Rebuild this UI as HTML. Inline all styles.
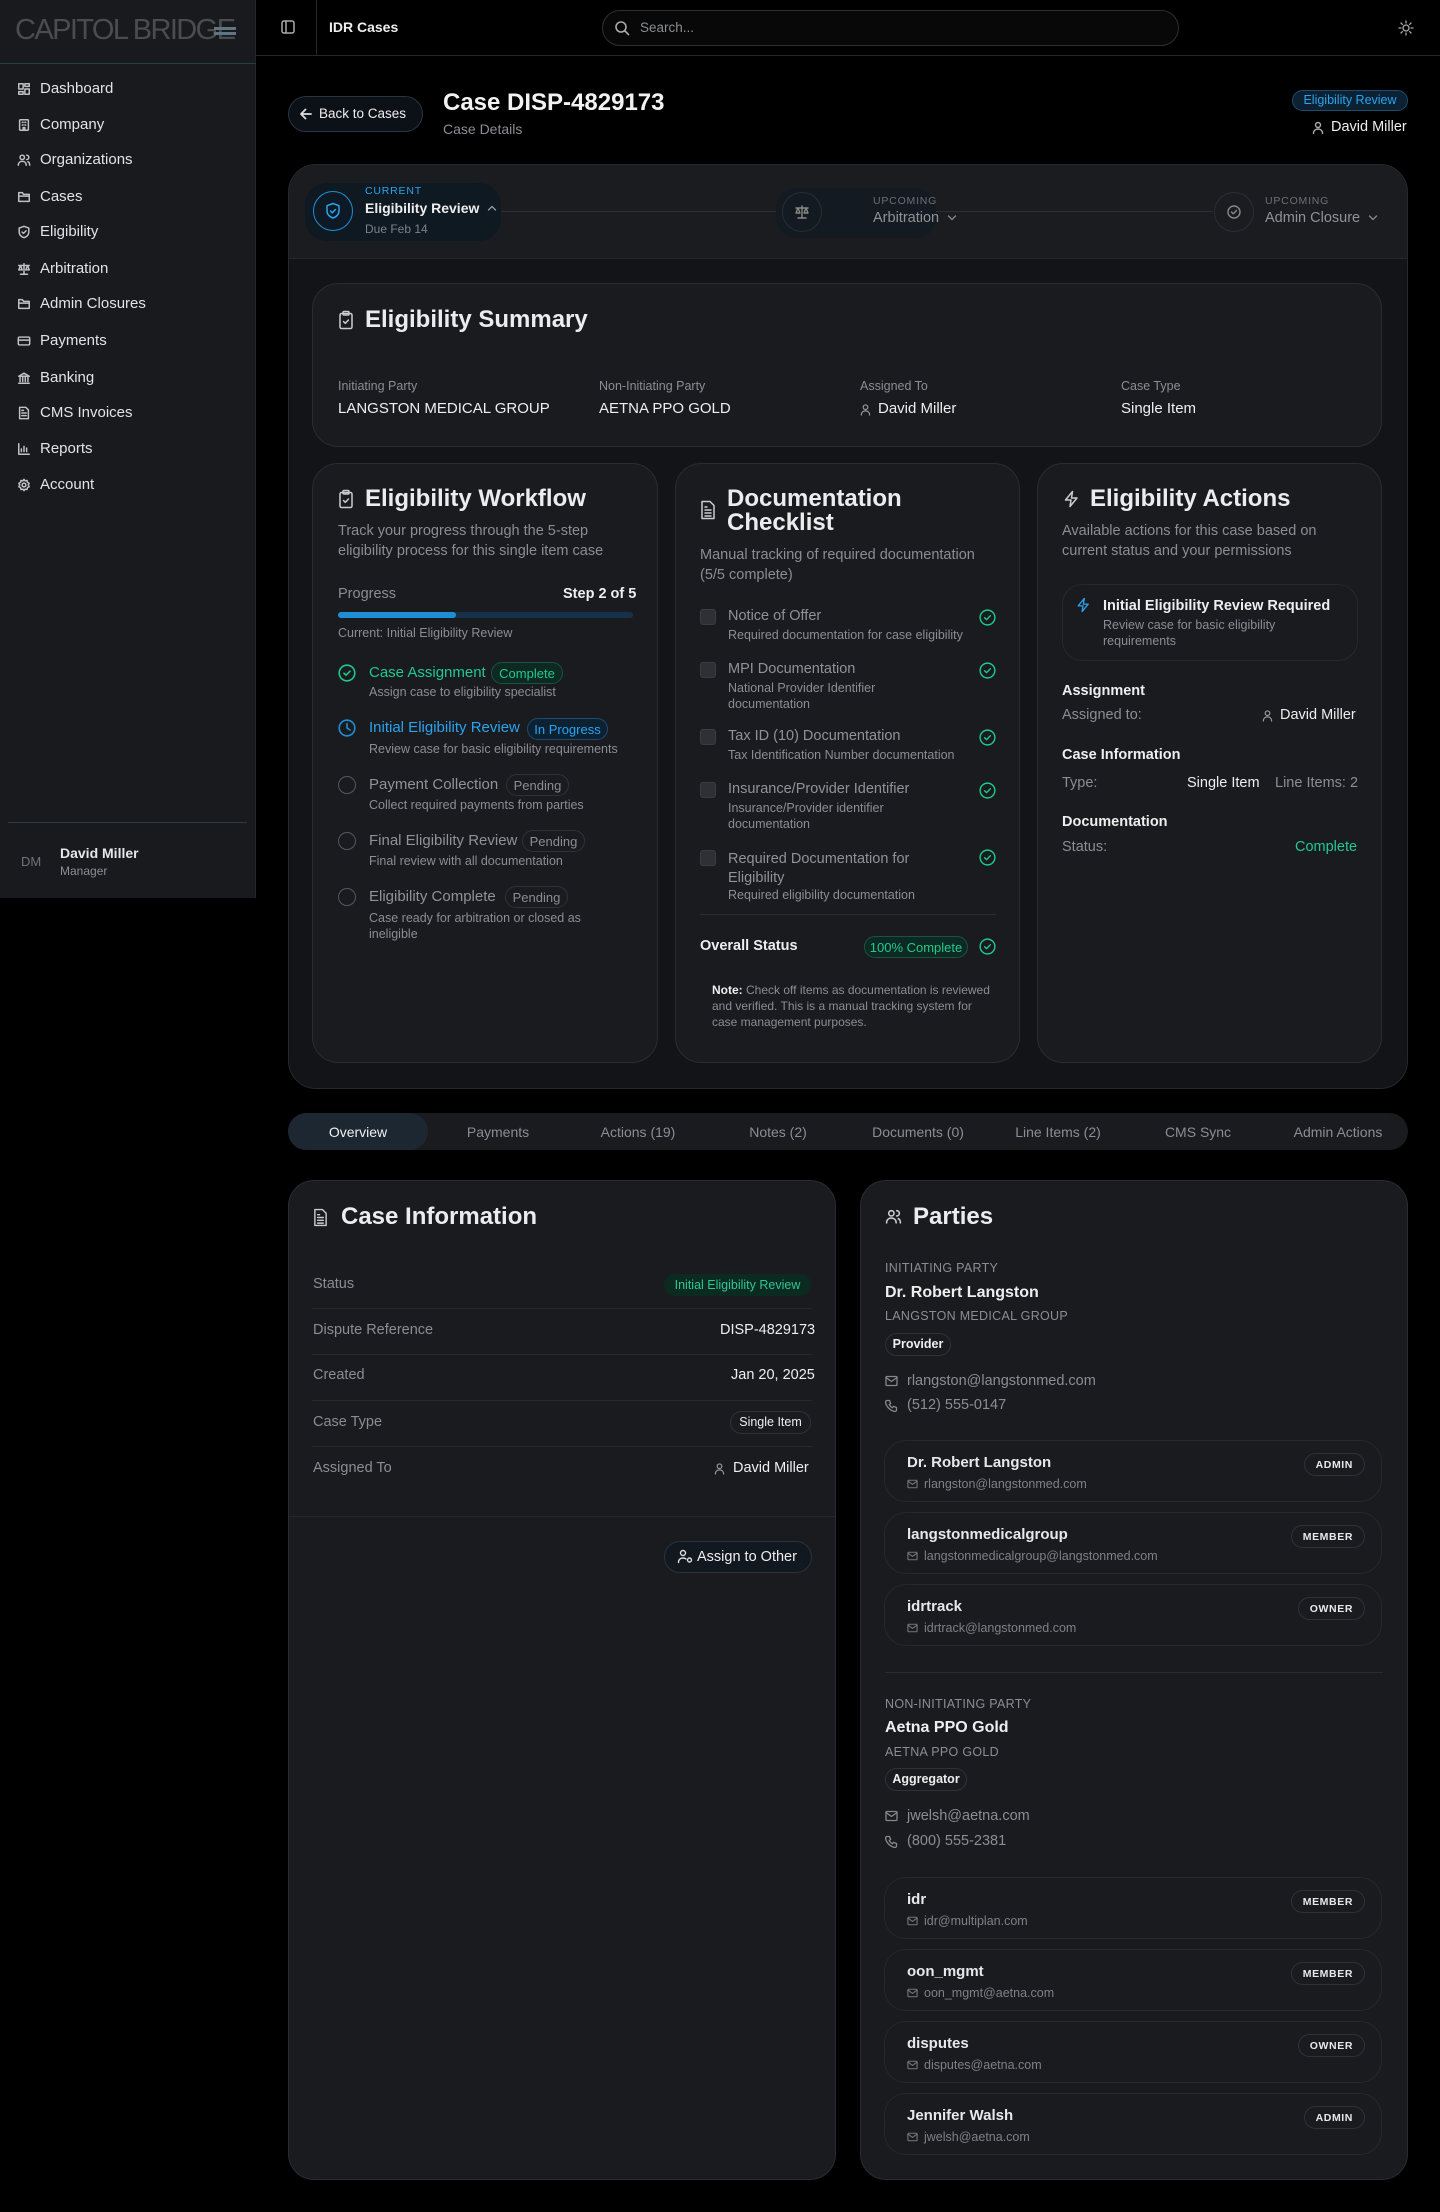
<!DOCTYPE html>
<html><head><meta charset="utf-8">
<style>
*{margin:0;padding:0;box-sizing:border-box}
body{width:1440px;height:2212px;background:#000;font-family:"Liberation Sans",Arial,sans-serif;color:#e8e8ea;position:relative;overflow:hidden}
.a{position:absolute}
.t{position:absolute;white-space:nowrap;line-height:1}
.muted{color:#8a8d93}
.dim{color:#6f7278}
svg{display:block}
.ic{position:absolute;fill:none;stroke:currentColor;stroke-width:1.8;stroke-linecap:round;stroke-linejoin:round}
.card{position:absolute;background:#191b1f;border:1px solid #2a2c31;border-radius:26px}
.pill{position:absolute;border:1px solid #2e3136;border-radius:999px;font-size:12px;line-height:1;display:flex;align-items:center;justify-content:center;white-space:nowrap}
.nav{position:absolute;left:17px;font-size:15px;color:#e2e3e6;display:flex;align-items:center;gap:9px}
.nav svg{width:14px;height:14px;fill:none;stroke:#bfc1c5;stroke-width:1.7;stroke-linecap:round;stroke-linejoin:round}
.row{position:absolute;left:312px;width:500px;height:1px;background:#26282d}
.mc{position:absolute;left:884px;width:498px;height:62px;border:1px solid #26282c;border-radius:22px}
.mc .n{position:absolute;left:22px;top:13px;font-size:15px;font-weight:bold;color:#e8e8ea}
.mc .e{position:absolute;left:22px;top:36px;font-size:12.5px;color:#7d8086;display:flex;align-items:center;gap:6px}
.mc .r{position:absolute;right:16px;top:12px;height:23px;padding:0 11px;border:1px solid #2e3136;border-radius:999px;font-size:10.5px;font-weight:bold;letter-spacing:.6px;display:flex;align-items:center}
.fx{display:flex;align-items:center;gap:8px}
</style></head><body>

<!-- Sidebar -->
<div class="a" style="left:0;top:0;width:256px;height:898px;background:#181a1e;border-right:1px solid #22252a"></div>
<div class="t" style="left:15px;top:16px;font-size:29px;font-weight:300;color:#4a4c50;letter-spacing:-1.6px">CAPITOL BRIDGE</div>
<div class="a" style="left:214px;top:27px;width:22px;height:3px;background:#5e7582"></div>
<div class="a" style="left:214px;top:32px;width:22px;height:3px;background:#5e7582"></div>
<div class="a" style="left:0;top:63px;width:256px;height:1px;background:#2e3a44"></div>

<div class="nav" style="top:80px"><svg viewBox="0 0 16 16"><rect x="2" y="2" width="5" height="6"/><rect x="9" y="2" width="5" height="3"/><rect x="9" y="8" width="5" height="6"/><rect x="2" y="11" width="5" height="3"/></svg>Dashboard</div>
<div class="nav" style="top:116px"><svg viewBox="0 0 16 16"><rect x="3" y="2" width="10" height="12" rx="1"/><path d="M6 5h1M9 5h1M6 8h1M9 8h1M7 14v-3h2v3"/></svg>Company</div>
<div class="nav" style="top:151px"><svg viewBox="0 0 16 16"><circle cx="6" cy="5" r="2.5"/><path d="M1.5 14c0-3 2-4.5 4.5-4.5s4.5 1.5 4.5 4.5M11 2.5a2.5 2.5 0 010 5M12.5 10c1.5.6 2 2 2 4"/></svg>Organizations</div>
<div class="nav" style="top:188px"><svg viewBox="0 0 16 16"><path d="M2 13V3h4l1.5 2H14v8z"/><path d="M2 7h12"/></svg>Cases</div>
<div class="nav" style="top:223px"><svg viewBox="0 0 16 16"><path d="M8 1.5l5.5 2v4.5c0 3.5-2.5 5.5-5.5 6.5-3-1-5.5-3-5.5-6.5V3.5z"/><path d="M5.8 8l1.6 1.6 3-3"/></svg>Eligibility</div>
<div class="nav" style="top:260px"><svg viewBox="0 0 16 16"><path d="M8 2v12M4 14h8M2 4h12M4 4l-2 5h4zM12 4l-2 5h4z"/></svg>Arbitration</div>
<div class="nav" style="top:295px"><svg viewBox="0 0 16 16"><path d="M2 13V3h4l1.5 2H14v8z"/><path d="M2 7h12"/></svg>Admin Closures</div>
<div class="nav" style="top:332px"><svg viewBox="0 0 16 16"><rect x="1.5" y="3.5" width="13" height="9" rx="1.5"/><path d="M1.5 7h13"/></svg>Payments</div>
<div class="nav" style="top:369px"><svg viewBox="0 0 16 16"><path d="M2 6l6-3.5L14 6zM3.5 7v5M6.5 7v5M9.5 7v5M12.5 7v5M2 14h12"/></svg>Banking</div>
<div class="nav" style="top:404px"><svg viewBox="0 0 16 16"><path d="M3 1.5h7l3 3v10H3z"/><path d="M5.5 8h5M5.5 11h5M5.5 5h2"/></svg>CMS Invoices</div>
<div class="nav" style="top:440px"><svg viewBox="0 0 16 16"><path d="M2 2v12h12M5 11V8M8 11V5M11 11V7"/></svg>Reports</div>
<div class="nav" style="top:476px"><svg viewBox="0 0 16 16"><circle cx="8" cy="8" r="2.2"/><path d="M8 1.5l1.3 1.8 2.2-.5.4 2.2 2 1-1 2 1 2-2 1-.4 2.2-2.2-.5L8 14.5l-1.3-1.8-2.2.5-.4-2.2-2-1 1-2-1-2 2-1 .4-2.2 2.2.5z"/></svg>Account</div>

<div class="a" style="left:8px;top:822px;width:239px;height:1px;background:#2e3a44"></div>
<div class="t" style="left:21px;top:855px;font-size:13px;color:#6f7278">DM</div>
<div class="t" style="left:60px;top:846px;font-size:14px;font-weight:bold;color:#e5e6e8">David Miller</div>
<div class="t" style="left:60px;top:865px;font-size:12px;color:#8a8d93">Manager</div>

<!-- Topbar -->
<div class="a" style="left:256px;top:55px;width:1184px;height:1px;background:#25272b"></div>
<div class="a" style="left:316px;top:0;width:1px;height:55px;background:#25272b"></div>
<svg class="ic" style="left:280px;top:19px;color:#aaa;stroke-width:1.5" width="16" height="16" viewBox="0 0 16 16"><rect x="2" y="2" width="12" height="12" rx="2"/><path d="M6 2v12"/></svg>
<div class="t" style="left:329px;top:20px;font-size:14px;font-weight:bold;color:#eee">IDR Cases</div>
<div class="a" style="left:602px;top:10px;width:577px;height:36px;border:1px solid #2d2f33;border-radius:18px;background:#080808"></div>
<svg class="ic" style="left:614px;top:20px;color:#aaa;stroke-width:1.6" width="16" height="16" viewBox="0 0 16 16"><circle cx="7" cy="7" r="5"/><path d="M11 11l3.5 3.5"/></svg>
<div class="t" style="left:640px;top:21px;font-size:13.5px;color:#8a8d93">Search...</div>
<svg class="ic" style="left:1398px;top:20px;color:#aaa;stroke-width:1.3" width="16" height="16" viewBox="0 0 16 16"><circle cx="8" cy="8" r="3"/><path d="M8 1v2M8 13v2M1 8h2M13 8h2M3 3l1.4 1.4M11.6 11.6L13 13M3 13l1.4-1.4M11.6 4.4L13 3"/></svg>

<!-- Header -->
<div class="a" style="left:288px;top:96px;width:135px;height:36px;border:1px solid #2b3440;border-radius:18px;background:#0c1117"></div>
<svg class="ic" style="left:299px;top:107px;color:#ddd" width="14" height="14" viewBox="0 0 14 14"><path d="M12 7H2M6.5 2.5L2 7l4.5 4.5"/></svg>
<div class="t" style="left:319px;top:107px;font-size:13.5px;color:#eee">Back to Cases</div>
<div class="t" style="left:443px;top:91px;font-size:24px;font-weight:bold;color:#f2f2f3">Case DISP-4829173</div>
<div class="t" style="left:443px;top:122px;font-size:14px;color:#8a8d93">Case Details</div>
<div class="pill" style="left:1292px;top:90px;width:116px;height:21px;background:#0c2233;border-color:#1d4c6e;color:#2aa3f0;font-size:12.5px">Eligibility Review</div>
<svg class="ic" style="left:1312px;top:121px;color:#aaa;stroke-width:1.4" width="12" height="13" viewBox="0 0 12 13"><circle cx="6" cy="4" r="2.5"/><path d="M1.5 12.5c0-3 2-4.5 4.5-4.5s4.5 1.5 4.5 4.5"/></svg>
<div class="t" style="left:1331px;top:120px;font-size:14.5px;color:#eee">David Miller</div>

<!-- Main eligibility panel -->
<div class="a" style="left:288px;top:164px;width:1120px;height:925px;background:#131417;border:1px solid #26282c;border-radius:28px;overflow:hidden">
  <div class="a" style="left:0;top:0;width:1120px;height:94px;background:#1a1c20;border-bottom:1px solid #24262a"></div>
</div>
<!-- stage bar -->
<div class="a" style="left:498px;top:211px;width:282px;height:1px;background:#2c2e33"></div>
<div class="a" style="left:932px;top:211px;width:281px;height:1px;background:#2c2e33"></div>
<div class="a" style="left:305px;top:183px;width:196px;height:58px;border-radius:22px;background:#0f1922"></div>
<div class="a" style="left:313px;top:191px;width:40px;height:40px;border-radius:50%;border:1.5px solid #1e8fd6;background:#0d1a25"></div>
<svg class="ic" style="left:325px;top:202px;color:#2aa3f0;stroke-width:1.5" width="16" height="18" viewBox="0 0 16 18"><path d="M8 1.5l6 2.2v5c0 3.6-2.6 6-6 7.3-3.4-1.3-6-3.7-6-7.3v-5z"/><path d="M5.5 9l1.8 1.8 3.2-3.3"/></svg>
<div class="t" style="left:365px;top:186px;font-size:10.5px;color:#2aa3f0;letter-spacing:.8px">CURRENT</div>
<div class="t fx" style="left:365px;top:201px;font-size:14px;font-weight:bold;color:#eee">Eligibility Review<svg class="ic" style="position:static;color:#999;stroke-width:1.3" width="10" height="8" viewBox="0 0 10 8"><path d="M1.5 6l3.5-3.5L8.5 6"/></svg></div>
<div class="t" style="left:365px;top:223px;font-size:12px;color:#7d8086">Due Feb 14</div>

<div class="a" style="left:776px;top:188px;width:160px;height:50px;border-radius:20px;background:#141a21"></div>
<div class="a" style="left:782px;top:192px;width:40px;height:40px;border-radius:50%;border:1px solid #2a2e33"></div>
<svg class="ic" style="left:794px;top:204px;color:#888;stroke-width:1.4" width="16" height="16" viewBox="0 0 16 16"><path d="M8 2v12M4 14h8M2 4h12M4 4l-2 5h4zM12 4l-2 5h4z"/></svg>
<div class="t" style="left:873px;top:196px;font-size:10.5px;color:#6c6f74;letter-spacing:.8px">UPCOMING</div>
<div class="t fx" style="left:873px;top:211px;font-size:14.5px;color:#8f9297">Arbitration<svg class="ic" style="position:static;color:#888;stroke-width:1.3" width="10" height="8" viewBox="0 0 10 8"><path d="M1.5 2l3.5 3.5L8.5 2"/></svg></div>
<div class="a" style="left:1214px;top:192px;width:40px;height:40px;border-radius:50%;border:1px solid #2a2e33"></div>
<svg class="ic" style="left:1226px;top:204px;color:#888;stroke-width:1.4" width="16" height="16" viewBox="0 0 16 16"><circle cx="8" cy="8" r="6"/><path d="M5.5 8l1.8 1.8 3.2-3.3"/></svg>
<div class="t" style="left:1265px;top:196px;font-size:10.5px;color:#6c6f74;letter-spacing:.8px">UPCOMING</div>
<div class="t fx" style="left:1265px;top:211px;font-size:14.5px;color:#8f9297">Admin Closure<svg class="ic" style="position:static;color:#888;stroke-width:1.3" width="10" height="8" viewBox="0 0 10 8"><path d="M1.5 2l3.5 3.5L8.5 2"/></svg></div>

<!-- Eligibility Summary -->
<div class="card" style="left:312px;top:283px;width:1070px;height:164px"></div>
<svg class="ic" style="left:338px;top:310px;color:#ccc;stroke-width:1.5" width="16" height="20" viewBox="0 0 16 20"><rect x="2" y="3.5" width="12" height="15" rx="1.5"/><rect x="5" y="1.5" width="6" height="3.5" rx="1"/><path d="M5.5 11.5l1.8 1.8 3.2-3.3"/></svg>
<div class="t" style="left:365px;top:308px;font-size:24px;font-weight:bold;color:#ececee">Eligibility Summary</div>
<div class="t muted" style="left:338px;top:380px;font-size:12.5px">Initiating Party</div>
<div class="t" style="left:338px;top:401px;font-size:15px;color:#eee">LANGSTON MEDICAL GROUP</div>
<div class="t muted" style="left:599px;top:380px;font-size:12.5px">Non-Initiating Party</div>
<div class="t" style="left:599px;top:401px;font-size:15px;color:#eee">AETNA PPO GOLD</div>
<div class="t muted" style="left:860px;top:380px;font-size:12.5px">Assigned To</div>
<svg class="ic" style="left:860px;top:403px;color:#999;stroke-width:1.3" width="11" height="13" viewBox="0 0 12 13"><circle cx="6" cy="4" r="2.5"/><path d="M1.5 12.5c0-3 2-4.5 4.5-4.5s4.5 1.5 4.5 4.5"/></svg>
<div class="t" style="left:878px;top:401px;font-size:15px;color:#eee">David Miller</div>
<div class="t muted" style="left:1121px;top:380px;font-size:12.5px">Case Type</div>
<div class="t" style="left:1121px;top:401px;font-size:15px;color:#eee">Single Item</div>

<!-- Workflow -->
<div class="card" style="left:312px;top:463px;width:346px;height:600px"></div>
<svg class="ic" style="left:338px;top:489px;color:#ccc;stroke-width:1.5" width="16" height="20" viewBox="0 0 16 20"><rect x="2" y="3.5" width="12" height="15" rx="1.5"/><rect x="5" y="1.5" width="6" height="3.5" rx="1"/><path d="M5.5 11.5l1.8 1.8 3.2-3.3"/></svg>
<div class="t" style="left:365px;top:487px;font-size:24px;font-weight:bold;color:#ececee">Eligibility Workflow</div>
<div class="t muted" style="left:338px;top:521px;font-size:14.5px;line-height:20px;white-space:normal;width:300px">Track your progress through the 5-step eligibility process for this single item case</div>
<div class="t muted" style="left:338px;top:587px;font-size:14.5px">Progress</div>
<div class="t" style="left:563px;top:587px;font-size:14.5px;font-weight:bold;color:#eee">Step 2 of 5</div>
<div class="a" style="left:338px;top:612px;width:295px;height:6px;border-radius:3px;background:#16324a"></div>
<div class="a" style="left:338px;top:612px;width:118px;height:6px;border-radius:3px;background:#1e8fd6"></div>
<div class="t muted" style="left:338px;top:627px;font-size:12.5px">Current: Initial Eligibility Review</div>

<svg class="ic" style="left:338px;top:664px;color:#1fc98a;stroke-width:1.6" width="18" height="18" viewBox="0 0 18 18"><circle cx="9" cy="9" r="7.8"/><path d="M6 9.2l2 2 4-4"/></svg>
<div class="t" style="left:369px;top:665px;font-size:15px;color:#22c98d">Case Assignment</div>
<div class="pill" style="left:491px;top:662px;width:72px;height:22px;background:#0d2a22;border-color:#1c5240;color:#22c98d;font-size:13px">Complete</div>
<div class="t muted" style="left:369px;top:686px;font-size:12.5px">Assign case to eligibility specialist</div>

<svg class="ic" style="left:338px;top:719px;color:#1e8fd6;stroke-width:1.6" width="18" height="18" viewBox="0 0 18 18"><circle cx="9" cy="9" r="7.8"/><path d="M9 4.5V9l3 2"/></svg>
<div class="t" style="left:369px;top:720px;font-size:15px;color:#2aa3f0">Initial Eligibility Review</div>
<div class="pill" style="left:527px;top:718px;width:81px;height:22px;background:#0c2233;border-color:#1d4c6e;color:#2aa3f0;font-size:13px">In Progress</div>
<div class="t muted" style="left:369px;top:743px;font-size:12.5px">Review case for basic eligibility requirements</div>

<div class="a" style="left:338px;top:776px;width:18px;height:18px;border-radius:50%;border:1.5px solid #54575c"></div>
<div class="t" style="left:369px;top:777px;font-size:15px;color:#8f9297">Payment Collection</div>
<div class="pill" style="left:506px;top:774px;width:63px;height:22px;color:#8a8d93;font-size:13px">Pending</div>
<div class="t muted" style="left:369px;top:799px;font-size:12.5px">Collect required payments from parties</div>

<div class="a" style="left:338px;top:832px;width:18px;height:18px;border-radius:50%;border:1.5px solid #54575c"></div>
<div class="t" style="left:369px;top:833px;font-size:15px;color:#8f9297">Final Eligibility Review</div>
<div class="pill" style="left:522px;top:830px;width:63px;height:22px;color:#8a8d93;font-size:13px">Pending</div>
<div class="t muted" style="left:369px;top:855px;font-size:12.5px">Final review with all documentation</div>

<div class="a" style="left:338px;top:888px;width:18px;height:18px;border-radius:50%;border:1.5px solid #54575c"></div>
<div class="t" style="left:369px;top:889px;font-size:15px;color:#8f9297">Eligibility Complete</div>
<div class="pill" style="left:505px;top:886px;width:63px;height:22px;color:#8a8d93;font-size:13px">Pending</div>
<div class="t muted" style="left:369px;top:910px;font-size:12.5px;line-height:16px;white-space:normal;width:240px">Case ready for arbitration or closed as ineligible</div>

<!-- Documentation -->
<div class="card" style="left:675px;top:463px;width:345px;height:600px"></div>
<svg class="ic" style="left:700px;top:500px;color:#ccc;stroke-width:1.5" width="16" height="20" viewBox="0 0 16 20"><path d="M2 1.5h8l4 4v13H2z"/><path d="M5 10h6M5 13h6M5 16h6M5 7h2"/></svg>
<div class="t" style="left:727px;top:487px;font-size:24px;font-weight:bold;color:#ececee;line-height:24px">Documentation<br>Checklist</div>
<div class="t muted" style="left:700px;top:545px;font-size:14.5px;line-height:20px;white-space:normal;width:300px">Manual tracking of required documentation (5/5 complete)</div>

<div class="t" style="left:700px;top:939px;font-size:14.5px;font-weight:bold;color:#eee">Overall Status</div>
<div class="pill" style="left:864px;top:936px;width:104px;height:22px;background:#0d2a22;border-color:#1c5240;color:#22c98d;font-size:13px">100% Complete</div>
<svg class="ic" style="left:979px;top:938px;color:#1fc98a;stroke-width:1.5" width="17" height="17" viewBox="0 0 18 18"><circle cx="9" cy="9" r="7.8"/><path d="M6 9.2l2 2 4-4"/></svg>
<div class="a" style="left:700px;top:914px;width:296px;height:1px;background:#2a2c31"></div>
<div class="t muted" style="left:712px;top:982px;font-size:12px;line-height:16px;white-space:normal;width:280px"><b style="color:#eee">Note:</b> Check off items as documentation is reviewed and verified. This is a manual tracking system for case management purposes.</div>

<!-- Actions -->
<div class="card" style="left:1037px;top:463px;width:345px;height:600px"></div>
<svg class="ic" style="left:1063px;top:490px;color:#ccc;stroke-width:1.5" width="16" height="18" viewBox="0 0 16 18"><path d="M9.5 1.5L2.5 10h5.5l-1 6.5 7-8.5H8.5z"/></svg>
<div class="t" style="left:1090px;top:487px;font-size:24px;font-weight:bold;color:#ececee">Eligibility Actions</div>
<div class="t muted" style="left:1062px;top:521px;font-size:14.5px;line-height:20px;white-space:normal;width:300px">Available actions for this case based on current status and your permissions</div>
<div class="a" style="left:1062px;top:584px;width:296px;height:77px;border:1px solid #26282c;border-radius:20px"></div>
<svg class="ic" style="left:1076px;top:597px;color:#2aa3f0;stroke-width:1.5" width="14" height="16" viewBox="0 0 16 18"><path d="M9.5 1.5L2.5 10h5.5l-1 6.5 7-8.5H8.5z"/></svg>
<div class="t" style="left:1103px;top:599px;font-size:14.5px;font-weight:bold;color:#eee">Initial Eligibility Review Required</div>
<div class="t muted" style="left:1103px;top:617px;font-size:12.5px;line-height:16px;white-space:normal;width:220px">Review case for basic eligibility requirements</div>
<div class="t" style="left:1062px;top:684px;font-size:14.5px;font-weight:bold;color:#eee">Assignment</div>
<div class="t muted" style="left:1062px;top:708px;font-size:14.5px">Assigned to:</div>
<svg class="ic" style="left:1262px;top:709px;color:#999;stroke-width:1.3" width="11" height="13" viewBox="0 0 12 13"><circle cx="6" cy="4" r="2.5"/><path d="M1.5 12.5c0-3 2-4.5 4.5-4.5s4.5 1.5 4.5 4.5"/></svg>
<div class="t" style="left:1280px;top:708px;font-size:14.5px;color:#eee">David Miller</div>
<div class="t" style="left:1062px;top:748px;font-size:14.5px;font-weight:bold;color:#eee">Case Information</div>
<div class="t muted" style="left:1062px;top:776px;font-size:14.5px">Type:</div>
<div class="t" style="left:1187px;top:776px;font-size:14.5px;color:#eee">Single Item</div>
<div class="t muted" style="left:1275px;top:776px;font-size:14.5px">Line Items: 2</div>
<div class="t" style="left:1062px;top:815px;font-size:14.5px;font-weight:bold;color:#eee">Documentation</div>
<div class="t" style="left:1062px;top:840px;font-size:14.5px;color:#8a8d93">Status:</div>
<div class="t" style="left:1295px;top:840px;font-size:14.5px;color:#22c98d">Complete</div>

<!-- Tabs -->
<div class="a" style="left:288px;top:1113px;width:1120px;height:37px;border-radius:19px;background:#1a1b1e;display:flex;font-size:14px;color:#8a8d93">
  <div style="flex:1;display:flex;align-items:center;justify-content:center;background:#1d2731;border-radius:19px;color:#f0f0f0">Overview</div>
  <div style="flex:1;display:flex;align-items:center;justify-content:center">Payments</div>
  <div style="flex:1;display:flex;align-items:center;justify-content:center">Actions (19)</div>
  <div style="flex:1;display:flex;align-items:center;justify-content:center">Notes (2)</div>
  <div style="flex:1;display:flex;align-items:center;justify-content:center">Documents (0)</div>
  <div style="flex:1;display:flex;align-items:center;justify-content:center">Line Items (2)</div>
  <div style="flex:1;display:flex;align-items:center;justify-content:center">CMS Sync</div>
  <div style="flex:1;display:flex;align-items:center;justify-content:center">Admin Actions</div>
</div>

<!-- Case Information -->
<div class="card" style="left:288px;top:1180px;width:548px;height:1000px"></div>
<svg class="ic" style="left:313px;top:1208px;color:#ccc;stroke-width:1.5" width="15" height="19" viewBox="0 0 16 20"><path d="M2 1.5h8l4 4v13H2z"/><path d="M5 10h6M5 13h6M5 16h6M5 7h2"/></svg>
<div class="t" style="left:341px;top:1205px;font-size:24px;font-weight:bold;color:#ececee">Case Information</div>
<div class="t muted" style="left:313px;top:1277px;font-size:14.5px">Status</div>
<div class="pill" style="left:664px;top:1274px;width:147px;height:22px;background:#0b2a20;border-color:#0b2a20;color:#2dc596;font-size:12.5px">Initial Eligibility Review</div>
<div class="row" style="top:1308px"></div>
<div class="t muted" style="left:313px;top:1323px;font-size:14.5px">Dispute Reference</div>
<div class="t" style="left:720px;top:1323px;font-size:14.5px;color:#eee">DISP-4829173</div>
<div class="row" style="top:1354px"></div>
<div class="t muted" style="left:313px;top:1368px;font-size:14.5px">Created</div>
<div class="t" style="left:731px;top:1368px;font-size:14.5px;color:#eee">Jan 20, 2025</div>
<div class="row" style="top:1400px"></div>
<div class="t muted" style="left:313px;top:1415px;font-size:14.5px">Case Type</div>
<div class="pill" style="left:730px;top:1411px;width:81px;height:23px;color:#eee;font-size:12.5px">Single Item</div>
<div class="row" style="top:1446px"></div>
<div class="t muted" style="left:313px;top:1461px;font-size:14.5px">Assigned To</div>
<svg class="ic" style="left:714px;top:1462px;color:#999;stroke-width:1.3" width="11" height="13" viewBox="0 0 12 13"><circle cx="6" cy="4" r="2.5"/><path d="M1.5 12.5c0-3 2-4.5 4.5-4.5s4.5 1.5 4.5 4.5"/></svg>
<div class="t" style="left:733px;top:1461px;font-size:14.5px;color:#eee">David Miller</div>
<div class="a" style="left:289px;top:1516px;width:546px;height:1px;background:#24262a"></div>
<div class="a" style="left:664px;top:1541px;width:148px;height:32px;border:1px solid #2a323c;border-radius:16px;background:#121820"></div>
<svg class="ic" style="left:677px;top:1549px;color:#ddd;stroke-width:1.4" width="16" height="15" viewBox="0 0 16 15"><circle cx="6" cy="4" r="2.5"/><path d="M1.5 13.5c0-3 2-4.5 4.5-4.5 1.2 0 2.2.3 3 .9"/><circle cx="12.5" cy="11" r="2"/></svg>
<div class="t" style="left:697px;top:1550px;font-size:14.5px;color:#eee">Assign to Other</div>

<!-- Parties -->
<div class="card" style="left:860px;top:1180px;width:548px;height:1000px"></div>
<svg class="ic" style="left:885px;top:1208px;color:#ccc;stroke-width:1.5" width="17" height="17" viewBox="0 0 16 16"><circle cx="6" cy="5" r="2.5"/><path d="M1.5 14c0-3 2-4.5 4.5-4.5s4.5 1.5 4.5 4.5M11 2.5a2.5 2.5 0 010 5M12.5 10c1.5.6 2 2 2 4"/></svg>
<div class="t" style="left:913px;top:1205px;font-size:24px;font-weight:bold;color:#ececee">Parties</div>

<div class="t muted" style="left:885px;top:1262px;font-size:12.5px;letter-spacing:.3px">INITIATING PARTY</div>
<div class="t" style="left:885px;top:1285px;font-size:16px;font-weight:bold;color:#eee">Dr. Robert Langston</div>
<div class="t muted" style="left:885px;top:1310px;font-size:12.5px;letter-spacing:.3px">LANGSTON MEDICAL GROUP</div>
<div class="pill" style="left:885px;top:1333px;width:66px;height:23px;color:#eee;font-size:12.5px;font-weight:bold">Provider</div>
<svg class="ic" style="left:885px;top:1375px;color:#888;stroke-width:1.3" width="13" height="12" viewBox="0 0 13 12"><rect x="1" y="1.5" width="11" height="9" rx="1"/><path d="M1 2.5l5.5 4 5.5-4"/></svg>
<div class="t muted" style="left:907px;top:1374px;font-size:14.5px">rlangston@langstonmed.com</div>
<svg class="ic" style="left:885px;top:1399px;color:#888;stroke-width:1.3" width="13" height="13" viewBox="0 0 13 13"><path d="M2 1.5h2.5l1.2 3-1.5 1c.8 1.6 1.8 2.6 3.3 3.3l1-1.5 3 1.2V11c0 .8-.7 1.5-1.5 1.5C5.5 12 1 7.5.5 3 .5 2.2 1.2 1.5 2 1.5z"/></svg>
<div class="t muted" style="left:907px;top:1398px;font-size:14.5px">(512) 555-0147</div>

<div class="mc" style="top:1440px"><div class="n">Dr. Robert Langston</div><div class="e"><svg class="ic" style="position:static;color:#777;stroke-width:1.3" width="11" height="10" viewBox="0 0 13 12"><rect x="1" y="1.5" width="11" height="9" rx="1"/><path d="M1 2.5l5.5 4 5.5-4"/></svg>rlangston@langstonmed.com</div><div class="r">ADMIN</div></div>
<div class="mc" style="top:1512px"><div class="n">langstonmedicalgroup</div><div class="e"><svg class="ic" style="position:static;color:#777;stroke-width:1.3" width="11" height="10" viewBox="0 0 13 12"><rect x="1" y="1.5" width="11" height="9" rx="1"/><path d="M1 2.5l5.5 4 5.5-4"/></svg>langstonmedicalgroup@langstonmed.com</div><div class="r">MEMBER</div></div>
<div class="mc" style="top:1584px"><div class="n">idrtrack</div><div class="e"><svg class="ic" style="position:static;color:#777;stroke-width:1.3" width="11" height="10" viewBox="0 0 13 12"><rect x="1" y="1.5" width="11" height="9" rx="1"/><path d="M1 2.5l5.5 4 5.5-4"/></svg>idrtrack@langstonmed.com</div><div class="r">OWNER</div></div>

<div class="a" style="left:885px;top:1672px;width:498px;height:1px;background:#2a2c31"></div>
<div class="t muted" style="left:885px;top:1698px;font-size:12.5px;letter-spacing:.3px">NON-INITIATING PARTY</div>
<div class="t" style="left:885px;top:1720px;font-size:16px;font-weight:bold;color:#eee">Aetna PPO Gold</div>
<div class="t muted" style="left:885px;top:1746px;font-size:12.5px;letter-spacing:.3px">AETNA PPO GOLD</div>
<div class="pill" style="left:885px;top:1768px;width:82px;height:23px;color:#eee;font-size:12.5px;font-weight:bold">Aggregator</div>
<svg class="ic" style="left:885px;top:1810px;color:#888;stroke-width:1.3" width="13" height="12" viewBox="0 0 13 12"><rect x="1" y="1.5" width="11" height="9" rx="1"/><path d="M1 2.5l5.5 4 5.5-4"/></svg>
<div class="t muted" style="left:907px;top:1809px;font-size:14.5px">jwelsh@aetna.com</div>
<svg class="ic" style="left:885px;top:1835px;color:#888;stroke-width:1.3" width="13" height="13" viewBox="0 0 13 13"><path d="M2 1.5h2.5l1.2 3-1.5 1c.8 1.6 1.8 2.6 3.3 3.3l1-1.5 3 1.2V11c0 .8-.7 1.5-1.5 1.5C5.5 12 1 7.5.5 3 .5 2.2 1.2 1.5 2 1.5z"/></svg>
<div class="t muted" style="left:907px;top:1834px;font-size:14.5px">(800) 555-2381</div>

<div class="mc" style="top:1877px"><div class="n">idr</div><div class="e"><svg class="ic" style="position:static;color:#777;stroke-width:1.3" width="11" height="10" viewBox="0 0 13 12"><rect x="1" y="1.5" width="11" height="9" rx="1"/><path d="M1 2.5l5.5 4 5.5-4"/></svg>idr@multiplan.com</div><div class="r">MEMBER</div></div>
<div class="mc" style="top:1949px"><div class="n">oon_mgmt</div><div class="e"><svg class="ic" style="position:static;color:#777;stroke-width:1.3" width="11" height="10" viewBox="0 0 13 12"><rect x="1" y="1.5" width="11" height="9" rx="1"/><path d="M1 2.5l5.5 4 5.5-4"/></svg>oon_mgmt@aetna.com</div><div class="r">MEMBER</div></div>
<div class="mc" style="top:2021px"><div class="n">disputes</div><div class="e"><svg class="ic" style="position:static;color:#777;stroke-width:1.3" width="11" height="10" viewBox="0 0 13 12"><rect x="1" y="1.5" width="11" height="9" rx="1"/><path d="M1 2.5l5.5 4 5.5-4"/></svg>disputes@aetna.com</div><div class="r">OWNER</div></div>
<div class="mc" style="top:2093px"><div class="n">Jennifer Walsh</div><div class="e"><svg class="ic" style="position:static;color:#777;stroke-width:1.3" width="11" height="10" viewBox="0 0 13 12"><rect x="1" y="1.5" width="11" height="9" rx="1"/><path d="M1 2.5l5.5 4 5.5-4"/></svg>jwelsh@aetna.com</div><div class="r">ADMIN</div></div>

<!-- Doc checklist items -->
<div class="a" style="left:700px;top:609px;width:16px;height:16px;border-radius:3px;background:#2e3035;border:1px solid #3a3c41"></div>
<div class="t" style="left:728px;top:609px;font-size:14.5px;color:#8f9297">Notice of Offer</div>
<div class="t muted" style="left:728px;top:629px;font-size:12.5px">Required documentation for case eligibility</div>
<svg class="ic" style="left:979px;top:609px;color:#1fc98a;stroke-width:1.5" width="17" height="17" viewBox="0 0 18 18"><circle cx="9" cy="9" r="7.8"/><path d="M6 9.2l2 2 4-4"/></svg>

<div class="a" style="left:700px;top:662px;width:16px;height:16px;border-radius:3px;background:#2e3035;border:1px solid #3a3c41"></div>
<div class="t" style="left:728px;top:662px;font-size:14.5px;color:#8f9297">MPI Documentation</div>
<div class="t muted" style="left:728px;top:680px;font-size:12.5px;line-height:16px">National Provider Identifier<br>documentation</div>
<svg class="ic" style="left:979px;top:662px;color:#1fc98a;stroke-width:1.5" width="17" height="17" viewBox="0 0 18 18"><circle cx="9" cy="9" r="7.8"/><path d="M6 9.2l2 2 4-4"/></svg>

<div class="a" style="left:700px;top:729px;width:16px;height:16px;border-radius:3px;background:#2e3035;border:1px solid #3a3c41"></div>
<div class="t" style="left:728px;top:729px;font-size:14.5px;color:#8f9297">Tax ID (10) Documentation</div>
<div class="t muted" style="left:728px;top:749px;font-size:12.5px">Tax Identification Number documentation</div>
<svg class="ic" style="left:979px;top:729px;color:#1fc98a;stroke-width:1.5" width="17" height="17" viewBox="0 0 18 18"><circle cx="9" cy="9" r="7.8"/><path d="M6 9.2l2 2 4-4"/></svg>

<div class="a" style="left:700px;top:782px;width:16px;height:16px;border-radius:3px;background:#2e3035;border:1px solid #3a3c41"></div>
<div class="t" style="left:728px;top:782px;font-size:14.5px;color:#8f9297">Insurance/Provider Identifier</div>
<div class="t muted" style="left:728px;top:800px;font-size:12.5px;line-height:16px">Insurance/Provider identifier<br>documentation</div>
<svg class="ic" style="left:979px;top:782px;color:#1fc98a;stroke-width:1.5" width="17" height="17" viewBox="0 0 18 18"><circle cx="9" cy="9" r="7.8"/><path d="M6 9.2l2 2 4-4"/></svg>

<div class="a" style="left:700px;top:850px;width:16px;height:16px;border-radius:3px;background:#2e3035;border:1px solid #3a3c41"></div>
<div class="t" style="left:728px;top:850px;font-size:14.5px;color:#8f9297;line-height:19px">Required Documentation for<br>Eligibility</div>
<div class="t muted" style="left:728px;top:889px;font-size:12.5px">Required eligibility documentation</div>
<svg class="ic" style="left:979px;top:849px;color:#1fc98a;stroke-width:1.5" width="17" height="17" viewBox="0 0 18 18"><circle cx="9" cy="9" r="7.8"/><path d="M6 9.2l2 2 4-4"/></svg>

</body></html>
